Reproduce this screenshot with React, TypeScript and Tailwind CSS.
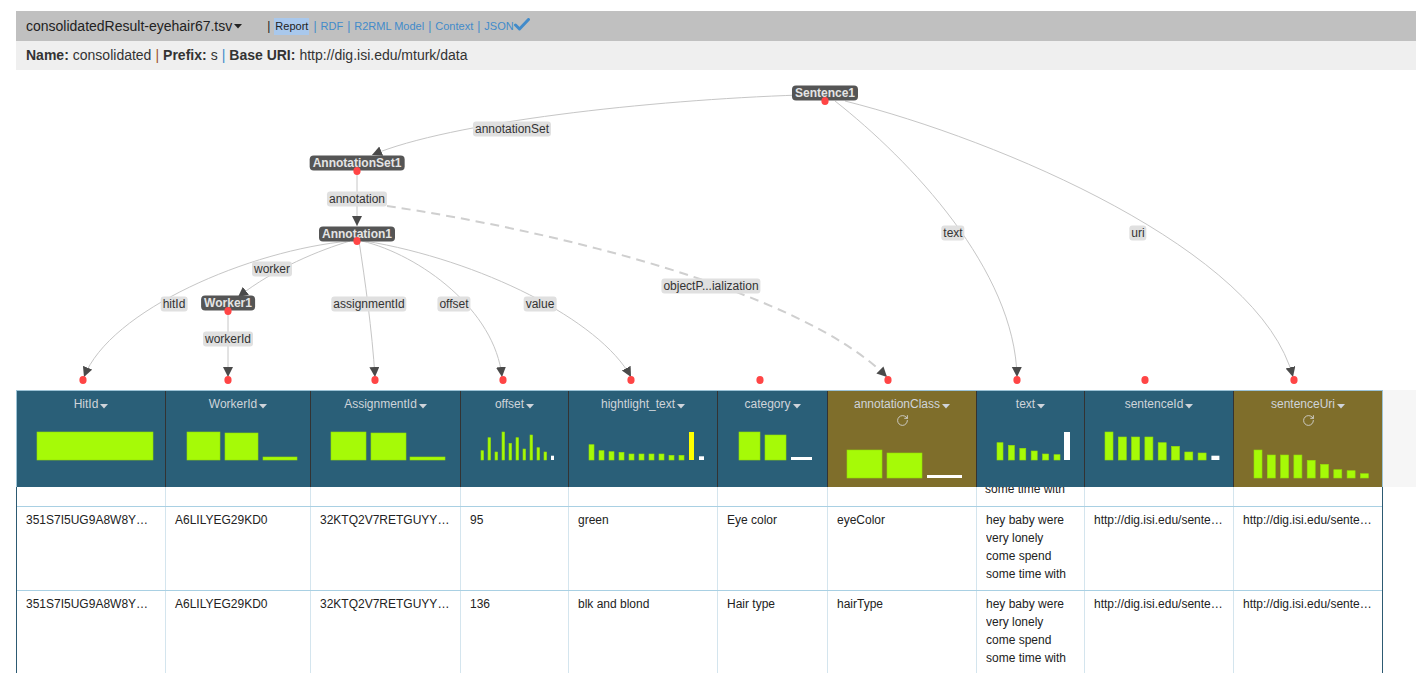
import React from "react";
import { RotateCw } from "lucide-react";

const G = "#a6fa07";
const W = "#ffffff";
const Y = "#ffff00";

type Bar = [number, number, number, string];

const range = (n: number) => Array.from({ length: n }, (_, i) => i);

const cols: {
  name: string;
  w: string;
  olive?: boolean;
  bars: Bar[];
  bottom: number;
}[] = [
  { name: "HitId", w: "w-[149px]", bars: [[20, 116, 432, G]], bottom: 460 },
  {
    name: "WorkerId",
    w: "w-[145px]",
    bars: [
      [21, 33, 432, G],
      [59, 33, 433, G],
      [97, 34, 457, G],
    ],
    bottom: 460,
  },
  {
    name: "AssignmentId",
    w: "w-[150px]",
    bars: [
      [20, 35, 432, G],
      [60, 35, 433, G],
      [99, 35, 457, G],
    ],
    bottom: 460,
  },
  {
    name: "offset",
    w: "w-[108px]",
    bars: [
      ...[450.7, 437.7, 452, 432, 443.3, 437.7, 449, 435, 447.7, 452].map(
        (t, i) => [20 + 7 * i, 2.6, t, G] as Bar
      ),
      [90, 3, 455.7, W],
    ],
    bottom: 460,
  },
  {
    name: "hightlight_text",
    w: "w-[149px]",
    bars: [
      ...[444.7, 450.7, 451.7, 452.3, 454, 454, 454, 454, 455.3, 455.3].map(
        (t, i) => [20 + 10 * i, 5, t, G] as Bar
      ),
      [120, 5, 432, Y],
      [130, 5, 456.3, W],
    ],
    bottom: 460,
  },
  {
    name: "category",
    w: "w-[110px]",
    bars: [
      [21, 21, 432, G],
      [47, 21, 435, G],
      [73, 21, 457, W],
    ],
    bottom: 460,
  },
  {
    name: "annotationClass",
    w: "w-[149px]",
    olive: true,
    bars: [
      [19, 35, 450, G],
      [59, 35, 453, G],
      [99, 35, 475, W],
    ],
    bottom: 478,
  },
  {
    name: "text",
    w: "w-[108px]",
    bars: [
      ...[442.7, 445.3, 448.3, 451, 454, 454.7].map(
        (t, i) => [20 + 11.4 * i, 6, t, G] as Bar
      ),
      [87, 6, 432, W],
    ],
    bottom: 460,
  },
  {
    name: "sentenceId",
    w: "w-[149px]",
    bars: [
      ...[432, 437, 437, 437, 442.7, 446.3, 452, 453].map(
        (t, i) => [20 + 13.3 * i, 8, t, G] as Bar
      ),
      [126.4, 8, 455.7, W],
    ],
    bottom: 460,
  },
  {
    name: "sentenceUri",
    w: "w-[148px]",
    olive: true,
    bars: [450, 455, 455, 455, 460.3, 464.3, 469.7, 470.7, 473.7].map(
      (t, i) => [20 + 13.3 * i, 8, t, G] as Bar
    ),
    bottom: 478,
  },
];

const rows = [
  ["351S7I5UG9A8W8Y…", "A6LILYEG29KD0", "32KTQ2V7RETGUYY…", "95", "green", "Eye color", "eyeColor", "TEXT", "http://dig.isi.edu/sente…", "http://dig.isi.edu/sente…"],
  ["351S7I5UG9A8W8Y…", "A6LILYEG29KD0", "32KTQ2V7RETGUYY…", "136", "blk and blond", "Hair type", "hairType", "TEXT", "http://dig.isi.edu/sente…", "http://dig.isi.edu/sente…"],
];

function Chart({ bars, bottom, offsetY, height }: { bars: Bar[]; bottom: number; offsetY: number; height: number }) {
  return (
    <svg width="148" height={height} className="block self-start">
      {bars.map(([x, w, t, c], i) => (
        <rect key={i} x={x} y={t - offsetY} width={w} height={bottom - t} fill={c} stroke={c === G ? "#93de06" : "none"} strokeWidth={c === G ? 0.6 : 0} />
      ))}
    </svg>
  );
}

function Caret({ color }: { color: string }) {
  return (
    <svg width="8" height="5" className="inline-block ml-[2px] mb-[2px]">
      <polygon points="0,0 8,0 4,4.5" fill={color} />
    </svg>
  );
}

function Label({ text, cls }: { text: string; cls: string }) {
  return (
    <div className={`absolute -translate-x-1/2 -translate-y-1/2 whitespace-nowrap rounded-[3px] bg-[#e0e0e0] px-[2px] text-[12px] leading-[15px] text-[#333] ${cls}`}>
      {text}
    </div>
  );
}

function Node({ text, cls }: { text: string; cls: string }) {
  return (
    <div className={`absolute -translate-x-1/2 -translate-y-1/2 whitespace-nowrap rounded-[4px] bg-[#555] px-[3px] text-[12px] font-bold leading-[15px] text-[#e4e4e4] ${cls}`}>
      {text}
    </div>
  );
}

function Graph() {
  const edge = { fill: "none", stroke: "#c6c6c6", strokeWidth: 1, markerEnd: "url(#arr)" } as const;
  const dots: [number, number][] = [
    [825, 101],
    [357, 171],
    [357, 241],
    [228, 311],
    [83, 380],
    [228, 380],
    [375, 380],
    [503, 380],
    [631, 380],
    [760, 380],
    [888, 380],
    [1017, 380],
    [1145, 380],
    [1294, 380],
  ];
  return (
    <div className="relative h-[320px] w-[1416px]">
      <svg className="absolute left-0 top-0" width="1416" height="320" viewBox="0 70 1416 320">
        <defs>
          <marker id="arr" markerUnits="userSpaceOnUse" markerWidth="11" markerHeight="11" refX="10" refY="5" orient="auto">
            <path d="M0,0 L10,5 L0,10 z" fill="#4a4a4a" />
          </marker>
        </defs>
        <path d="M 800 95 C 650 100, 450 122, 372 155" {...edge} />
        <path d="M 835 101 C 910 160, 1015 270, 1017 377" {...edge} />
        <path d="M 845 101 C 1000 140, 1260 250, 1293 377" {...edge} />
        <path d="M 357 171 L 357 226" {...edge} />
        <path d="M 387 206 C 550 230, 800 290, 887 377" fill="none" stroke="#cfcfcf" strokeWidth="2" strokeDasharray="9 6" markerEnd="url(#arr)" />
        <path d="M 350 241 C 320 250, 275 268, 238 297" {...edge} />
        <path d="M 350 241 C 250 250, 110 310, 84 377" {...edge} />
        <path d="M 359 241 C 365 280, 372 330, 375 377" {...edge} />
        <path d="M 362 241 C 420 255, 495 310, 502 377" {...edge} />
        <path d="M 365 241 C 480 260, 600 320, 631 377" {...edge} />
        <path d="M 228 311 L 228 377" {...edge} />
      </svg>
      <Label text="annotationSet" cls="left-[512px] top-[59px]" />
      <Label text="annotation" cls="left-[357px] top-[129px]" />
      <Label text="text" cls="left-[953px] top-[163px]" />
      <Label text="uri" cls="left-[1138px] top-[163px]" />
      <Label text="worker" cls="left-[272px] top-[199px]" />
      <Label text="hitId" cls="left-[174px] top-[234px]" />
      <Label text="assignmentId" cls="left-[369px] top-[234px]" />
      <Label text="offset" cls="left-[454px] top-[234px]" />
      <Label text="value" cls="left-[540px] top-[234px]" />
      <Label text="workerId" cls="left-[228px] top-[269px]" />
      <Label text="objectP...ialization" cls="left-[711px] top-[216px]" />
      <Node text="Sentence1" cls="left-[825px] top-[23px]" />
      <Node text="AnnotationSet1" cls="left-[357px] top-[93px]" />
      <Node text="Annotation1" cls="left-[357px] top-[164px]" />
      <Node text="Worker1" cls="left-[228px] top-[233px]" />
      <svg className="pointer-events-none absolute left-0 top-0" width="1416" height="320" viewBox="0 70 1416 320">
        {dots.map(([x, y], i) => (
          <ellipse key={i} cx={x} cy={y} rx="3.6" ry="4" fill="#ff4545" />
        ))}
      </svg>
    </div>
  );
}

const TextLines = () => (
  <div className="h-[72px] overflow-hidden">
    <div>hey baby were</div>
    <div>very lonely</div>
    <div>come spend</div>
    <div>some time with</div>
  </div>
);

export default function App() {
  return (
    <div className="h-[673px] w-[1416px] overflow-hidden bg-white font-['Liberation_Sans',Arial,Helvetica,sans-serif] text-[#222]">
      <div className="h-[11px]" />
      <div className="ml-4 flex h-[30px] items-center bg-[#c0c0c0] pl-[10px]">
        <span className="text-[14px] text-[#222]">consolidatedResult-eyehair67.tsv</span>
        <svg width="8" height="5" className="ml-[2px] mt-[1px]">
          <polygon points="0,0 8,0 4,4.5" fill="#222" />
        </svg>
        <span className="ml-[25px] text-[12px] text-[#222]">|</span>
        <span className="ml-[4px] bg-[#a9c8ec] px-[1px] py-[2px] text-[11px] leading-[13px] text-[#222]">Report</span>
        <span className="mx-[4px] text-[12px] text-[#428bca]">|</span>
        <span className="text-[11px] text-[#428bca]">RDF</span>
        <span className="mx-[4px] text-[12px] text-[#428bca]">|</span>
        <span className="text-[11px] text-[#428bca]">R2RML Model</span>
        <span className="mx-[4px] text-[12px] text-[#428bca]">|</span>
        <span className="text-[11px] text-[#428bca]">Context</span>
        <span className="mx-[4px] text-[12px] text-[#428bca]">|</span>
        <span className="text-[11px] text-[#428bca]">JSON</span>
        <svg width="16" height="13" viewBox="0 0 16 13" className="mb-[3px]">
          <path d="M1.5 7 L5.5 11 L14.5 1.5" fill="none" stroke="#428bca" strokeWidth="3" strokeLinecap="round" strokeLinejoin="round" />
        </svg>
      </div>
      <div className="ml-4 flex h-[29px] items-center bg-[#efefef] pl-[10px] text-[14px] text-[#333]">
        <b>Name:</b>
        <span className="ml-[4px]">consolidated</span>
        <span className="mx-[4px] text-[#a0522d]">|</span>
        <b>Prefix:</b>
        <span className="ml-[4px]">s</span>
        <span className="mx-[4px] text-[#428bca]">|</span>
        <b>Base URI:</b>
        <span className="ml-[4px]">http://dig.isi.edu/mturk/data</span>
      </div>
      <Graph />
      <div className="flex">
        <div className="ml-4 flex border-l border-r border-t border-[#9cc3d6]">
          {cols.map((c, i) => (
            <div
              key={c.name}
              className={`${c.w} flex h-[96px] flex-col items-center ${i < cols.length - 1 ? "border-r border-[#333]" : ""} ${c.olive ? "bg-[#7f6e2b]" : "bg-[#2a5f78]"}`}
            >
              <div className="flex h-[20px] items-end text-[12px] leading-[14px] text-[#cfd4da]">
                {c.name}
                <Caret color="#cfd4da" />
              </div>
              {c.olive ? (
                <>
                  <div className="flex h-[18px] items-center justify-center">
                    <RotateCw size={13} strokeWidth={1.6} color="#d6d6d6" />
                  </div>
                  <Chart bars={c.bars} bottom={c.bottom} offsetY={429} height={58} />
                </>
              ) : (
                <Chart bars={c.bars} bottom={c.bottom} offsetY={411} height={76} />
              )}
            </div>
          ))}
        </div>
        <div className="h-[97px] flex-1 bg-[#f6f6f6]" />
      </div>
      <div className="ml-4 w-[1367px] border-l border-r border-[#2d5a72] text-[12px] leading-[18px] text-[#222]">
        <div className="flex h-[20px] border-b border-[#a9d0e3]">
          {cols.map((c, i) => (
            <div key={c.name} className={`${c.w} overflow-hidden px-[8px] ${i < cols.length - 1 ? "border-r border-[#d4e5ee]" : ""}`}>
              {c.name === "text" ? <div className="-mt-[7px]">some time with</div> : null}
            </div>
          ))}
        </div>
        {rows.map((r, ri) => (
          <div key={ri} className="flex h-[84px] border-b border-[#a9d0e3]">
            {cols.map((c, i) => (
              <div
                key={c.name}
                className={`${c.w} overflow-hidden whitespace-nowrap pl-[9px] pr-[6px] pt-[4px] ${i < cols.length - 1 ? "border-r border-[#d4e5ee]" : ""}`}
              >
                {r[i] === "TEXT" ? <TextLines /> : r[i]}
              </div>
            ))}
          </div>
        ))}
      </div>
    </div>
  );
}
